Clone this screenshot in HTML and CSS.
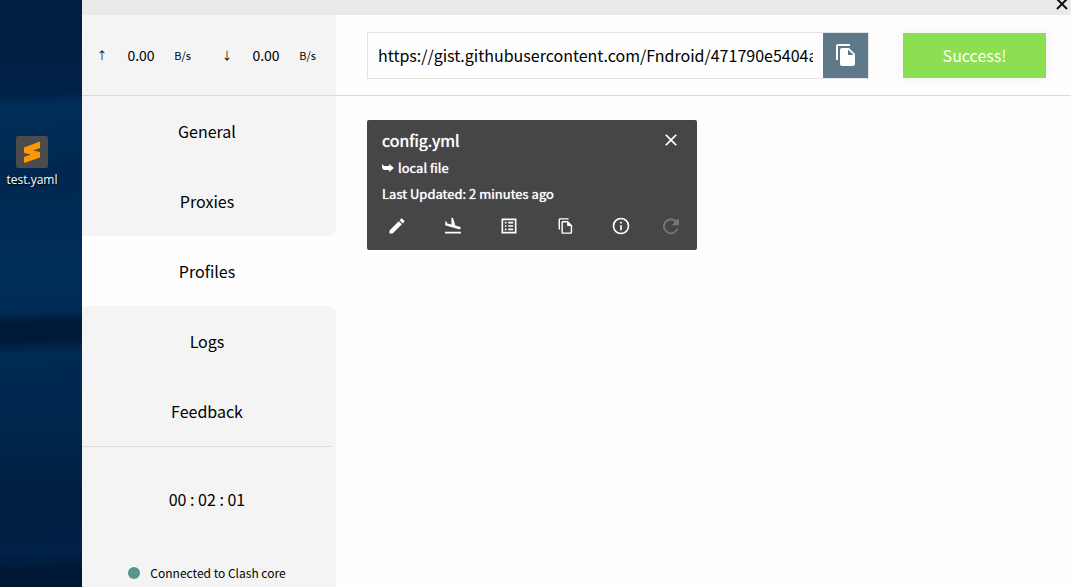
FILE: index.html
```html
<!DOCTYPE html>
<html lang="en">
<head>
    <meta charset="UTF-8">
    <title>Clash for Windows</title>
    <link rel="stylesheet" href="styles.css">
</head>
<body>
    <div class="desktop">
        <a class="desktop-file" href="#">
            <svg class="file-icon" viewBox="0 0 32 32">
                <rect width="32" height="32" rx="2" fill="#4b4b4b"/>
                <path d="M8 11.500 L24 5.500 V12 L17 14.500 L24 16 V21.500 L8 27 V21 L15 18.500 L8 17 Z" fill="#ff9800"/>
            </svg>
            <span>test.yaml</span>
        </a>
    </div>

    <div class="window">
        <header class="titlebar">
            <button class="window-close" type="button" aria-label="Close window">
                <svg width="12" height="12" viewBox="0 0 12 12"><path d="M1 1 L11 11 M11 1 L1 11" stroke="#111" stroke-width="2"/></svg>
            </button>
        </header>

        <div class="app">
            <aside class="sidebar">
                <div class="traffic">
                    <span class="arrow">↑</span><span class="speed">0.00</span><span class="unit">B/s</span>
                    <span class="arrow">↓</span><span class="speed">0.00</span><span class="unit">B/s</span>
                </div>
                <nav class="menu">
                    <a class="menu-item" href="#">General</a>
                    <a class="menu-item before-active" href="#">Proxies</a>
                    <a class="menu-item active" href="#">Profiles</a>
                    <a class="menu-item after-active" href="#">Logs</a>
                    <a class="menu-item" href="#">Feedback</a>
                </nav>
                <div class="status">
                    <div class="clock">00 : 02 : 01</div>
                    <div class="connection"><span class="dot"></span>Connected to Clash core</div>
                </div>
            </aside>

            <main class="content">
                <form class="toolbar">
                    <div class="url-box">
                        <input type="text" id="url" name="url" aria-label="Profile URL" value="https://gist.githubusercontent.com/Fndroid/471790e5404a">
                        <button class="paste" type="button" aria-label="Paste">
                            <svg width="24" height="24" viewBox="0 0 24 24" fill="#fff"><path d="M16 1H4c-1.100 0-2 .9-2 2v14h2V3h12V1zm-1 4 6 6v10c0 1.100-.9 2-2 2H7.990C6.890 23 6 22.100 6 21l.01-14c0-1.100.89-2 1.990-2h7zm-1 7h5.500L14 6.500V12z"/></svg>
                        </button>
                    </div>
                    <button class="download" type="button">Success!</button>
                </form>

                <section class="profiles">
                    <article class="profile">
                        <div class="profile-head">
                            <h2>config.yml</h2>
                            <button type="button" aria-label="Delete">
                                <svg viewBox="0 0 24 24"><path d="M19 6.410 17.590 5 12 10.590 6.410 5 5 6.410 10.590 12 5 17.590 6.410 19 12 13.410 17.590 19 19 17.590 13.410 12z"/></svg>
                            </button>
                        </div>
                        <p class="source"><svg width="12" height="10" viewBox="0 0 12 10"><path d="M0 1 L2 3 H7 V1 L12 5 L7 9 V7 H2 Q0 6 0 4 Z"/></svg>local file</p>
                        <p>Last Updated: 2 minutes ago</p>
                        <div class="actions">
                            <button type="button" aria-label="Edit">
                                <svg viewBox="0 0 24 24"><path d="M3 17.250V21h3.750L17.810 9.940l-3.750-3.750L3 17.250zM20.710 7.040c.39-.39.39-1.020 0-1.410l-2.340-2.340c-.39-.39-1.020-.39-1.410 0l-1.830 1.830 3.750 3.750 1.830-1.830z"/></svg>
                            </button>
                            <button type="button" aria-label="Rules">
                                <svg viewBox="0 0 24 24"><path d="M2.500 19h19v2h-19zm7.180-5.730 4.350 1.160 5.310 1.420c.8.210 1.620-.26 1.840-1.060.21-.8-.26-1.620-1.060-1.840l-5.310-1.420-2.760-9.020L10.120 2v8.280L5.150 8.950l-.93-2.320-1.450-.39v5.170l1.600.430 5.310 1.430z"/></svg>
                            </button>
                            <button type="button" aria-label="Proxies list">
                                <svg viewBox="0 0 24 24"><path d="M3 3h18v18H3V3zm2 2v14h14V5H5zm2 2h2v2H7V7zm4 0h6v2h-6V7zm-4 4h2v2H7v-2zm4 0h6v2h-6v-2zm-4 4h2v2H7v-2zm4 0h6v2h-6v-2z" fill-rule="evenodd"/></svg>
                            </button>
                            <button type="button" aria-label="Duplicate">
                                <svg viewBox="-3 -2 28 28"><path d="M16 1H4c-1.100 0-2 .9-2 2v14h2V3h12V1zm-1 4H8c-1.100 0-1.990.9-1.990 2L6 21c0 1.100.89 2 1.990 2H19c1.100 0 2-.9 2-2V11l-6-6zM8 21V7h6v5h5v9H8z" fill-rule="evenodd"/></svg>
                            </button>
                            <button type="button" aria-label="Info">
                                <svg viewBox="0 0 24 24"><path d="M11 7h2v2h-2zm0 4h2v6h-2zm1-9a10 10 0 1 0 0 20 10 10 0 0 0 0-20zm0 18a8 8 0 1 1 0-16 8 8 0 0 1 0 16z" fill-rule="evenodd"/></svg>
                            </button>
                            <button type="button" aria-label="Refresh" disabled>
                                <svg viewBox="0 0 24 24"><path d="M18 5a9.500 9.500 0 1 0 3 10h-2.300A7.200 7.200 0 1 1 16.500 7L13 11h8.500V3z"/></svg>
                            </button>
                        </div>
                    </article>
                </section>
            </main>
        </div>
    </div>
</body>
</html>
```

FILE: styles.css
```css
* { box-sizing: border-box; }
body { margin: 0; display: flex; min-height: 100vh; font-family: "Noto Sans CJK SC", "Open Sans", sans-serif; font-size: 16px; color: #000; background: #fefefe; }
a { color: inherit; text-decoration: none; }
button { padding: 0; border: 0; background: none; font: inherit; cursor: pointer; }
svg { display: block; }

.desktop { flex: 0 0 82px; padding-top: 136px; background: linear-gradient(178deg, #001f3f 0, #002247 16%, #002d59 18%, #002850 30%, #002d5a 45%, #002b56 53%, #001938 55%, #001b3a 58%, #002a53 60%, #00264b 75%, #001f3f 85%, #002148 94%, #001835 97%); }
.desktop-file { display: flex; flex-direction: column; align-items: center; width: 64px; font-family: "Open Sans", sans-serif; font-size: 12px; line-height: 24px; color: #fff; text-shadow: 1px 1px 2px #000; }
.file-icon { width: 32px; height: 32px; }

.window { flex: 1; min-width: 0; display: flex; flex-direction: column; }
.titlebar { display: flex; justify-content: flex-end; height: 15px; padding-right: 3px; background: #eaeaea; }
.window-close { height: 12px; align-self: flex-start; margin-top: -2px; }
.app { flex: 1; display: flex; }

.sidebar { flex: 0 0 254px; display: flex; flex-direction: column; background: #f4f4f4; }
.traffic { display: grid; grid-template-columns: 40px 38px 47px 40px 38px 47px; align-items: center; height: 81px; border-bottom: 1px solid #dadada; text-align: center; font-size: 14px; }
.arrow, .unit { font-size: 11px; }
.unit { padding-right: 2px; }
.menu { background: #fefefe; }
.menu-item { display: block; height: 70px; padding-right: 4px; background: #f4f4f4; line-height: 70px; text-align: center; }
.active { background: #fefefe; }
.before-active { border-bottom-right-radius: 8px; }
.after-active { border-top-right-radius: 8px; }
.status { flex: 1; display: flex; flex-direction: column; justify-content: space-between; align-items: center; margin-right: 4px; padding-top: 40px; border-top: 1px solid #dadada; }
.clock { line-height: 24px; }
.connection { display: flex; align-items: center; gap: 10px; font-size: 12px; line-height: 28px; }
.dot { width: 12px; height: 12px; border-radius: 50%; background: #57978a; }

.content { flex: 1; min-width: 0; }
.toolbar { display: flex; align-items: center; gap: 34px; height: 81px; padding: 0 25px 0 31px; border-bottom: 1px solid #dadada; }
.url-box { flex: 1; min-width: 0; display: flex; height: 47px; border: 1px solid #e2e2e2; }
.url-box input { flex: 1; min-width: 0; padding: 0 10px; border: 0; background: none; font: inherit; color: #000; }
.paste { flex: 0 0 45px; display: flex; align-items: center; justify-content: center; background: #5e7a8a; }
.download { width: 143px; height: 45px; background: #8bdf50; color: #fff; box-shadow: 0 0 16px rgba(0, 0, 0, 0.06); }

.profiles { display: flex; flex-wrap: wrap; padding: 24px 31px; }
.profile { width: 330px; padding: 6px 15px; border-radius: 2px; background: #464646; color: #fff; fill: #fff; font-size: 13px; text-shadow: 0 0 1px #fff; }
.profile-head { display: flex; align-items: center; justify-content: space-between; margin-bottom: 1px; }
.profile h2 { margin: 0; font-size: 16px; font-weight: 400; line-height: 28px; }
.profile p { margin: 0; line-height: 26px; }
.profile .source { display: flex; align-items: center; gap: 4px; }
.profile button { padding: 0 1px; }
.profile button svg { width: 20px; height: 20px; fill: #fff; }
.actions { display: grid; grid-template-columns: repeat(4, 56px) 50px 22px; align-items: center; justify-items: start; height: 37px; padding-left: 4px; }
.profile .actions button:disabled svg { fill: #777; }
```
